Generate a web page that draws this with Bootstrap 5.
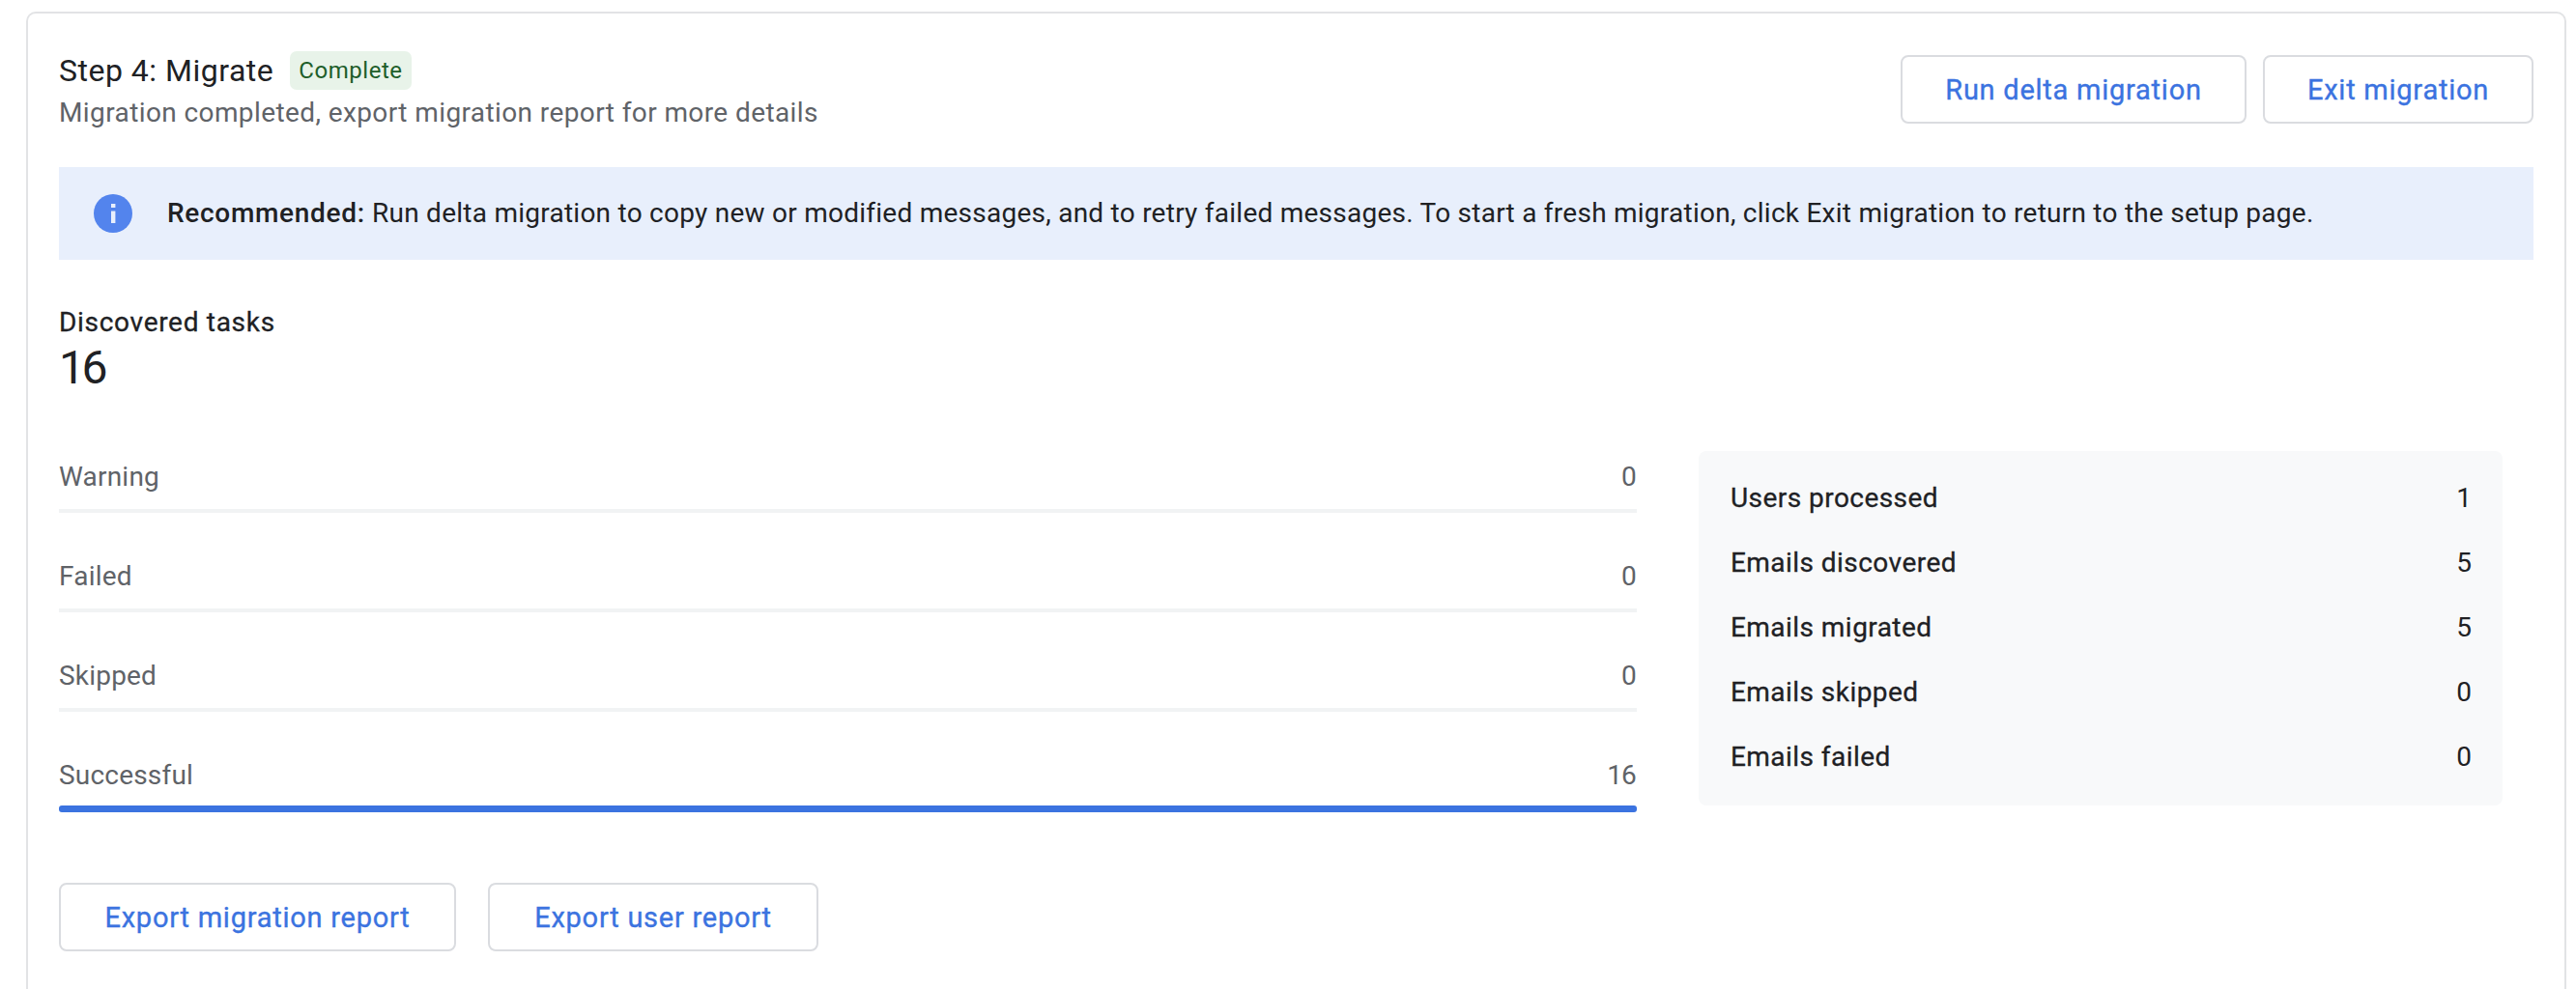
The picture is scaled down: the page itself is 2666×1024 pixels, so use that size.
<!DOCTYPE html>
<html lang="en">
<head>
<meta charset="utf-8">
<title>Step 4: Migrate</title>
<link rel="stylesheet" href="https://cdn.jsdelivr.net/npm/bootstrap@5.3.0/dist/css/bootstrap.min.css">
<style>
html, body { height: 100%; }
body { background: #fff; font-family: Roboto, "Liberation Sans", sans-serif; color: #202124; overflow: hidden; }
.page-wrap { padding: 12px 10px 0 27px; height: 1024px; overflow: hidden; }
.mig-panel { border: 2px solid #e2e3e5; border-bottom: 0; border-radius: 10px 10px 0 0; padding: 39px 32px 0 32px; height: 1012px; }
.mig-title { font-size: 32px; line-height: 40px; letter-spacing: .5px; }
.mig-status { background: #e8f3e9; color: #1e5e2a; font-size: 24px; line-height: 40px; height: 40px; border-radius: 7px; padding: 0 9px; margin-left: 17px; letter-spacing: .55px; }
.mig-sub { font-size: 28px; line-height: 40px; color: #5f6368; margin-top: 4px; letter-spacing: .4px; }
.mig-btn { background: #fff; border: 2px solid #dadce0; border-radius: 8px; color: #3b73e0; font-size: 29px; font-weight: 400; -webkit-text-stroke: .35px #3b73e0; letter-spacing: .75px; padding: 2px 0 0; height: 71px; display: inline-flex; align-items: center; justify-content: center; }
.mig-btn-run { width: 358px; }
.mig-btn-exit { width: 280px; }
.mig-btn-rep { width: 411px; }
.mig-btn-usr { width: 342px; }
.mig-head-actions { gap: 17px; margin-top: 4px; }
.mig-note { background: #e8effc; height: 96px; margin-top: 36px; padding-left: 36px; font-size: 28px; letter-spacing: .25px; gap: 36px; }
.mig-note svg { flex: none; }
.mig-note strong { font-weight: 500; letter-spacing: .7px; }
.mig-disc-label { font-size: 28px; line-height: 36px; margin-top: 47px; letter-spacing: .7px; font-weight: 400; -webkit-text-stroke: .3px #202124; }
.mig-disc-num { font-size: 48px; line-height: 52px; margin-top: 3px; letter-spacing: -3.5px; }
.mig-body { margin-top: 53px; gap: 64px; }
.mig-rows { flex: 0 0 1633px; }
.mig-row { height: 103px; color: #5f6368; font-size: 28px; letter-spacing: .2px; }
.mig-row-text { height: 67px; }
.mig-rownum { letter-spacing: -.8px; margin-right: 1px; }
.mig-track { height: 4px; background: #f1f3f4; }
.mig-track-on { height: 7px; background: #3b73e0; border-radius: 3px; margin-top: -2px; }
.mig-side { background: #f8f9fa; border-radius: 8px; width: 832px; height: 367px; margin-top: 7px; padding: 15px 32px 16px 33px; font-size: 28px; letter-spacing: .45px; font-weight: 400; -webkit-text-stroke: .3px #202124; }
.mig-side-row { height: 67px; }
.mig-sidenum { letter-spacing: 0; -webkit-text-stroke: 0; }
.mig-actions { gap: 33px; margin-top: 42px; }
</style>
</head>
<body>
<div class="page-wrap">
<div class="mig-panel">
  <div class="d-flex justify-content-between">
    <div>
      <div class="d-flex align-items-center"><span class="mig-title">Step 4: Migrate</span><span class="mig-status">Complete</span></div>
      <div class="mig-sub">Migration completed, export migration report for more details</div>
    </div>
    <div class="d-flex align-items-start mig-head-actions">
      <button type="button" class="btn mig-btn mig-btn-run">Run delta migration</button>
      <button type="button" class="btn mig-btn mig-btn-exit">Exit migration</button>
    </div>
  </div>
  <div class="mig-note d-flex align-items-center">
    <svg width="40" height="40" viewBox="0 0 40 40" aria-hidden="true"><circle cx="20" cy="20" r="20" fill="#5384ed"/><rect x="18" y="17.5" width="4.4" height="12.5" fill="#e8effc"/><rect x="18" y="10" width="4.4" height="4" fill="#e8effc"/></svg>
    <div><strong>Recommended:</strong> Run delta migration to copy new or modified messages, and to retry failed messages. To start a fresh migration, click Exit migration to return to the setup page.</div>
  </div>
  <div class="mig-disc-label">Discovered tasks</div>
  <div class="mig-disc-num">16</div>
  <div class="d-flex mig-body">
    <div class="mig-rows">
      <div class="mig-row"><div class="mig-row-text d-flex justify-content-between align-items-center"><span>Warning</span><span class="mig-rownum">0</span></div><div class="mig-track"></div></div>
      <div class="mig-row"><div class="mig-row-text d-flex justify-content-between align-items-center"><span>Failed</span><span class="mig-rownum">0</span></div><div class="mig-track"></div></div>
      <div class="mig-row"><div class="mig-row-text d-flex justify-content-between align-items-center"><span>Skipped</span><span class="mig-rownum">0</span></div><div class="mig-track"></div></div>
      <div class="mig-row"><div class="mig-row-text d-flex justify-content-between align-items-center"><span>Successful</span><span class="mig-rownum">16</span></div><div class="mig-track-on"></div></div>
    </div>
    <div class="mig-side">
      <div class="mig-side-row d-flex justify-content-between align-items-center"><span>Users processed</span><span class="mig-sidenum">1</span></div>
      <div class="mig-side-row d-flex justify-content-between align-items-center"><span>Emails discovered</span><span class="mig-sidenum">5</span></div>
      <div class="mig-side-row d-flex justify-content-between align-items-center"><span>Emails migrated</span><span class="mig-sidenum">5</span></div>
      <div class="mig-side-row d-flex justify-content-between align-items-center"><span>Emails skipped</span><span class="mig-sidenum">0</span></div>
      <div class="mig-side-row d-flex justify-content-between align-items-center"><span>Emails failed</span><span class="mig-sidenum">0</span></div>
    </div>
  </div>
  <div class="d-flex mig-actions">
    <button type="button" class="btn mig-btn mig-btn-rep">Export migration report</button>
    <button type="button" class="btn mig-btn mig-btn-usr">Export user report</button>
  </div>
</div>
</div>
<script src="https://cdn.jsdelivr.net/npm/bootstrap@5.3.0/dist/js/bootstrap.bundle.min.js"></script>
</body>
</html>
